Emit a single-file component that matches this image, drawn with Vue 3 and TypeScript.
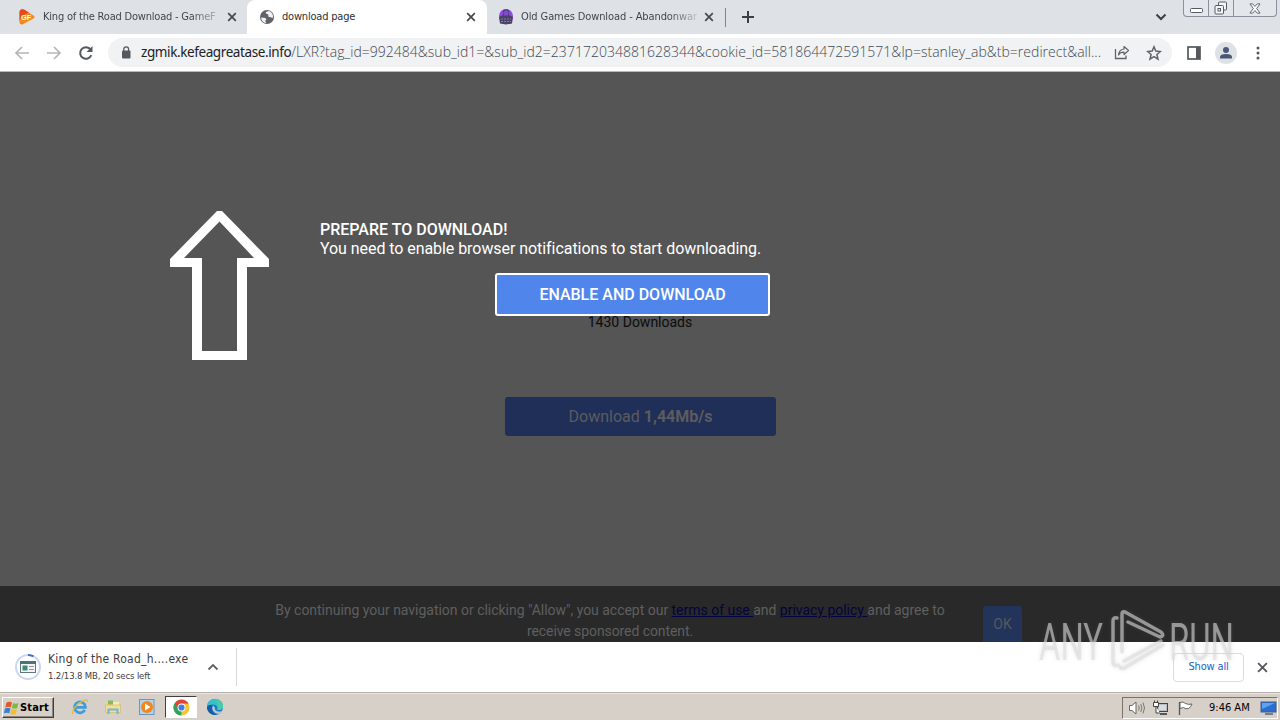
<script setup lang="ts">
const host = 'zgmik.kefeagreatase.info'
const path = '/LXR?tag_id=992484&sub_id1=&sub_id2=237172034881628344&cookie_id=581864472591571&lp=stanley_ab&tb=redirect&all...'
</script>

<template>
  <div class="screen">
    <header class="tabs">
      <div class="tab first">
        <svg class="fav" width="18" height="18" viewBox="0 0 18 18">
          <path d="M3 1.500Q1.500 2 1.500 4V14q0 3 3 2.500L15.500 10.500q2-1.500 0-3L6 1.500Q4.500 1 3 1.500z" fill="#f28a1c" />
          <path d="M3 1.500Q1.500 2 1.500 4V13Q3 7 11 4.500L6 1.500Q4.500 1 3 1.500z" fill="#e8481c" />
          <text x="3" y="12" font-size="7.500" font-weight="700" fill="#fff" font-family="Liberation Sans, sans-serif">GF</text>
        </svg>
        <span class="title t1">King of the Road Download - GameF</span>
        <svg class="close" width="10" height="10" viewBox="0 0 10 10"><path d="M1.200 1.200l7.600 7.600M8.800 1.200L1.200 8.800" /></svg>
      </div>
      <div class="tab active">
        <svg class="fav" width="16" height="16" viewBox="0 0 16 16">
          <circle cx="8" cy="8" r="7" fill="#5f6368" />
          <path d="M2.200 8.500c2 .3 4.600 0 5 1.500.3 1.200-.9 1-.8 2.200.1 1 .9 1.300.7 1.900-2.800-.3-5-2.800-4.900-5.600zM7 3l3-.9c2.200.7 3.800 2.700 4 5l-.3 2c-1.200.2-1.500-1-2.700-1-1.300 0-2.200-.6-1.700-1.800.3-.9-.3-1-1.100-1.200C7 4.900 6.500 3.800 7 3z" fill="#f1f2f3" />
        </svg>
        <span class="title t2">download page</span>
        <svg class="close" width="10" height="10" viewBox="0 0 10 10"><path d="M1.200 1.200l7.600 7.600M8.800 1.200L1.200 8.800" /></svg>
      </div>
      <div class="tab third">
        <svg class="fav" width="16" height="18" viewBox="0 0 16 18">
          <circle cx="8" cy="8" r="7" fill="#9747e8" />
          <path d="M5.500 8V4q0-2 2.500-2t2.500 2v4" fill="none" stroke="#4b3d80" stroke-width="1.300" />
          <path d="M8 2v7M5 5h6" stroke="#6a58a8" />
          <path d="M1 9l3-1.500h8L15 9l-1 6.500-6 1-6-1z" fill="#4a4068" />
          <path d="M3 11h10M3 13.500h10" stroke="#8579a5" stroke-dasharray="2 1" />
        </svg>
        <span class="title t3">Old Games Download - Abandonwar</span>
        <svg class="close" width="10" height="10" viewBox="0 0 10 10"><path d="M1.200 1.200l7.600 7.600M8.800 1.200L1.200 8.800" /></svg>
      </div>
      <i class="divider"></i>
      <svg class="plus" width="14" height="14" viewBox="0 0 14 14"><path d="M7 1v12M1 7h12" stroke="#3c4043" stroke-width="2" /></svg>
      <svg class="chev" width="12" height="8" viewBox="0 0 12 8"><path d="M1.500 1.500L6 6l4.500-4.500" fill="none" stroke="#3c4043" stroke-width="2" /></svg>
      <div class="winctl">
        <span><svg width="13" height="6" viewBox="0 0 13 6"><rect x=".5" y=".5" width="12" height="4" rx="1" fill="#fff" stroke="#555a66" /></svg></span>
        <span><svg width="14" height="14" viewBox="0 0 14 14"><g fill="#f4f5f7" stroke="#555a66"><rect x="4.500" y="1" width="8" height="8" rx="1" /><rect x="1" y="4.500" width="8.500" height="8.500" rx="1" /><rect x="4" y="7.500" width="2.500" height="2.500" /></g></svg></span>
        <span class="wide"><svg width="12" height="11" viewBox="0 0 13 12"><path d="M1 1h3l2.500 2.700L9 1h3L8.300 6 12 11H9L6.500 8.300 4 11H1l3.700-5z" fill="#fff" stroke="#555a66" /></svg></span>
      </div>
    </header>

    <div class="toolbar">
      <svg class="nav" width="16" height="14" viewBox="0 0 16 14"><path d="M15 7H2M8 1L2 7l6 6" fill="none" stroke="#b4b6b9" stroke-width="1.700" /></svg>
      <svg class="nav" width="16" height="14" viewBox="0 0 16 14"><path d="M1 7h13M8 1l6 6-6 6" fill="none" stroke="#b4b6b9" stroke-width="1.700" /></svg>
      <svg class="reload" width="16" height="16" viewBox="0 0 16 16"><path d="M13.300 10.200A5.800 5.800 0 1 1 12.200 4" fill="none" stroke="#55595e" stroke-width="2" /><path d="M14.500 1v6h-6z" fill="#55595e" /></svg>
      <div class="omni">
        <svg class="lock" width="10" height="13" viewBox="0 0 10 13"><rect x="1" y="4.500" width="8.500" height="8" rx="1" fill="#55595e" /><path d="M2.800 5V3.300a2.400 2.400 0 0 1 4.800 0V5" fill="none" stroke="#55595e" stroke-width="1.300" /></svg>
        <div class="url"><span class="host">{{ host }}</span><span class="path">{{ path }}</span></div>
        <svg class="share" width="16" height="15" viewBox="0 0 16 15"><path d="M1.500 4v9.500h10.500v-3" fill="none" stroke="#5f6368" stroke-width="1.300" /><path d="M10 1.500l4.500 4-4.500 4V7.200C7.500 7.200 5.500 8 4.500 10c.2-3 2-5.600 5.500-6z" fill="none" stroke="#5f6368" stroke-width="1.200" stroke-linejoin="round" /></svg>
        <svg class="star" width="16" height="16" viewBox="0 0 16 16"><path d="M8 1.800l1.800 4.300 4.600.4-3.500 3 1.100 4.600L8 11.700l-4 2.400 1.100-4.600-3.500-3 4.600-.4z" fill="none" stroke="#5f6368" stroke-width="1.500" /></svg>
      </div>
      <svg class="panel" width="14" height="14" viewBox="0 0 14 14"><rect x="1" y="1" width="12" height="12" fill="none" stroke="#55595e" stroke-width="1.700" /><path d="M9 1h4v12H9z" fill="#55595e" /></svg>
      <svg class="avatar" width="22" height="22" viewBox="0 0 22 22"><circle cx="11" cy="11" r="11" fill="#dee1e6" /><circle cx="11" cy="8" r="3" fill="#4a5873" /><path d="M5 16.500v-1.500q0-3 6-3t6 3v1.500z" fill="#4a5873" /></svg>
      <svg class="dots" width="4" height="14" viewBox="0 0 4 14"><g fill="#55595e"><circle cx="2" cy="2" r="1.500" /><circle cx="2" cy="7" r="1.500" /><circle cx="2" cy="12" r="1.500" /></g></svg>
    </div>

    <main class="page">
      <div class="prompt">
        <svg class="arrow" width="99" height="149" viewBox="0 0 99 149"><path fill="#fff" fill-rule="evenodd" d="M47 0h5L99 48v8H77v93H22V56H0V48zM49.500 10.500L14 47h18v93h35V47h17z" /></svg>
        <div class="msg">
          <div class="head">PREPARE TO DOWNLOAD!</div>
          <div class="need">You need to enable browser notifications to start downloading.</div>
          <button class="enable">ENABLE AND DOWNLOAD</button>
        </div>
      </div>
      <div class="count">1430 Downloads</div>
      <div class="dl">Download&nbsp;<b>1,44Mb/s</b></div>
      <footer class="consent">
        <div class="ctext">
          <div class="l1">By continuing your navigation or clicking "Allow", you accept our <u>terms of use </u>and <u>privacy policy </u>and agree to</div>
          <div class="l2">receive sponsored content.</div>
        </div>
        <div class="ok">OK</div>
      </footer>
    </main>

    <section class="shelf">
      <svg class="file" width="28" height="28" viewBox="0 0 28 28">
        <circle cx="14" cy="14" r="12" fill="none" stroke="#c9d7f3" stroke-width="2" />
        <path d="M14 2a12 12 0 0 1 5.500 1.400" fill="none" stroke="#3f6fc4" stroke-width="2.200" />
        <rect x="6.500" y="8.500" width="15" height="11" fill="#f2f5f4" stroke="#5f7780" />
        <path d="M6 8h16v3H6z" fill="#50707c" />
        <path d="M8.500 12.500h5v5h-5z" fill="#3f8a78" />
        <path d="M15 13.500h5M15 16.500h5" stroke="#8a989c" />
      </svg>
      <div class="names"><div class="fname">King of the Road_h....exe</div><div class="prog">1.2/13.8 MB, 20 secs left</div></div>
      <svg class="caret" width="12" height="8" viewBox="0 0 12 8"><path d="M1.500 6.500L6 2l4.500 4.500" fill="none" stroke="#5f6368" stroke-width="1.800" /></svg>
      <i class="sep"></i>
      <div class="showall">Show all</div>
      <svg class="sx" width="11" height="11" viewBox="0 0 10 10"><path d="M1 1l8 8M9 1L1 9" stroke="#55595e" stroke-width="1.700" /></svg>
    </section>

    <footer class="taskbar">
      <div class="start">
        <svg width="17" height="16" viewBox="0 0 17 16">
          <path d="M3.500 2.500q3-1.500 5.500 0L7.800 7.500q-2.500-1.300-5.500 0z" fill="#e2582b" />
          <path d="M10 3q2.500 1.300 5.500 0L14.300 8q-3 1.200-5.500 0z" fill="#7fb843" />
          <path d="M2 8.500q3-1.300 5.500 0L6.300 13.300q-2.500-1.300-5.500 0z" fill="#3f80cc" />
          <path d="M8.500 9q2.500 1.200 5.500 0l-1.200 5q-3 1.200-5.500 0z" fill="#f3bf2c" />
        </svg>
        <span>Start</span>
      </div>
      <svg class="ie" width="18" height="18" viewBox="0 0 18 18">
        <path d="M13.800 12A5.500 5.500 0 1 1 14.500 9.300H4.500" fill="none" stroke="#3b9ddd" stroke-width="2.700" />
        <path d="M2 16C0 13 6 5 13 2.300q4-1.500 3.300 1.500" fill="none" stroke="#e8b93a" stroke-width="1.300" />
      </svg>
      <svg class="folder" width="18" height="18" viewBox="0 0 18 18">
        <path d="M2 3h5l1 1.500h7V14H2z" fill="#ecd680" />
        <path d="M4 2.500h5v4H4z" fill="#83b96b" /><path d="M9 4h6v4H9z" fill="#f7ecb2" />
        <path d="M1.500 7h15v7.500h-15z" fill="#f3df93" stroke="#d1b65c" stroke-width=".6" />
        <path d="M4.500 16v-4.500h9V16" fill="none" stroke="#72b8dd" stroke-width="2.200" />
      </svg>
      <svg class="wmp" width="18" height="18" viewBox="0 0 18 18">
        <rect x="1.500" y="1.500" width="14.500" height="15" fill="#b5d3ec" stroke="#6796c0" />
        <circle cx="9" cy="9" r="6" fill="#f0861d" /><path d="M7 5.500v7L12.500 9z" fill="#fff" />
      </svg>
      <div class="pressed">
        <svg width="17" height="17" viewBox="0 0 16 16">
          <path d="M8 8L1.500 4.250A7.500 7.500 0 0 1 14.500 4.250z" fill="#e04434" />
          <path d="M8 8L14.500 4.250A7.500 7.500 0 0 1 8 15.500z" fill="#f9c22f" />
          <path d="M8 8V15.500A7.500 7.500 0 0 1 1.500 4.250z" fill="#35a353" />
          <path d="M8 4.200h6.400l.3.500-3.300 5z" fill="#f9c22f" /><path d="M8 4h6.300a7 7 0 0 0-.6-1z" fill="#e04434" />
          <path d="M4.800 9.800L1.500 4.250 8 4.200z" fill="#e04434" /><path d="M1.500 4.250L5 9.800 8 12 6.500 15.300A7.500 7.500 0 0 1 1.500 4.250z" fill="#35a353" />
          <circle cx="8" cy="8" r="3.700" fill="#fff" /><circle cx="8" cy="8" r="2.900" fill="#3f7de8" />
        </svg>
      </div>
      <svg class="edge" width="18" height="18" viewBox="0 0 18 18">
        <circle cx="9" cy="9" r="8" fill="#1a79c9" />
        <path d="M1 8.500A8 8 0 0 1 17 9c0 3-4 3.600-6 2.500 1.500-2-.5-5-4-5-3 0-5.300 1-6 2z" fill="#35c1c9" />
        <path d="M9 1a8 8 0 0 1 8 8c0 3-4 3.600-6 2.500 2-2.500 0-8-2-10.500z" fill="#51cf9a" opacity=".7" />
        <path d="M7 7.500c-2 3 .5 8 5.500 8.500q2.500-1 3.500-3c-3 1.300-8 .5-7-3.200z" fill="#d6d0c8" opacity=".9" />
        <path d="M6.500 7.500C4.500 11 7 16 11 16.700A8 8 0 0 1 1 9c1.500-2 4-2.300 5.500-1.500z" fill="#145ca8" />
      </svg>
      <div class="tray">
        <svg class="vol" width="18" height="16" viewBox="0 0 18 16"><path d="M1.500 5.500H4L8 2v12L4 10.500H1.500z" fill="#fff" stroke="#666" /><path d="M10.500 5.500q1.500 2.500 0 5M12.700 4q2.500 4 0 8M15 2.500q3 5.500 0 11" fill="none" stroke="#777" /></svg>
        <svg class="net" width="18" height="16" viewBox="0 0 18 16"><rect x="5.500" y="3.500" width="10" height="8" fill="#b9bcc0" stroke="#444" /><path d="M7 5h7v5H7z" fill="#d9dcdf" /><path d="M8 14h7" stroke="#555" stroke-width="2" /><path d="M1.500 2.500h5v4h-5zM2.500.5v2M5.500.5v2M4 6.500V13h4" fill="#fff" stroke="#444" /></svg>
        <svg class="flag" width="18" height="16" viewBox="0 0 18 16"><path d="M3.500 15V2" stroke="#555" stroke-width="1.300" /><path d="M4 2.500q3-1.500 5.500 1 3 1.500 6.500.5-1 3-3.500 4.500-3 1-5-1L4 8.500z" fill="#fff" stroke="#666" /></svg>
        <span class="time">9:46 AM</span>
        <svg class="desk" width="17" height="14" viewBox="0 0 17 14"><rect x="1" y="1" width="15" height="10" fill="#2a6fd0" stroke="#3c5c94" /><path d="M2 2h13L2 8z" fill="#5da2ee" /><path d="M5 13h8" stroke="#56606e" stroke-width="1.500" /></svg>
      </div>
    </footer>

    <svg class="mark" width="210" height="76" viewBox="1030 604 210 76">
      <g opacity=".6">
        <g fill="#dcdcdc" font-family="Roboto, sans-serif" font-size="52" font-weight="400">
          <text x="1039" y="660" textLength="64" lengthAdjust="spacingAndGlyphs">ANY</text>
          <text x="1169" y="660" textLength="65" lengthAdjust="spacingAndGlyphs">RUN</text>
        </g>
        <g fill="none" stroke="#dcdcdc" stroke-width="3.500" stroke-linecap="round" stroke-linejoin="round">
          <path d="M1117 618q-4-1-4 3v41q0 5 5 3" />
          <path d="M1122 652V614q0-3 3-2L1161 632q4 4-1 5L1128 622" />
          <path d="M1161 641L1124 661M1163 645L1126 667q-4 3-6 0" />
        </g>
      </g>
    </svg>
  </div>
</template>

<style>
body { margin: 0; }
</style>

<style scoped>
* { box-sizing: border-box; }
svg { display: block; flex: none; }
.screen { position: relative; width: 1280px; height: 720px; overflow: hidden; display: flex; flex-direction: column; background: #fff; font-family: "DejaVu Sans Condensed", "DejaVu Sans", sans-serif; font-size: 11px; color: #3c4043; }
.tabs { height: 34px; background: #dee1e6; display: flex; align-items: center; flex: none; }
.tab { height: 34px; display: flex; align-items: center; flex: none; }
.first { width: 247px; padding-left: 18px; border-bottom-right-radius: 8px; }
.active { width: 240px; padding-left: 12px; background: #fff; border-radius: 8px 8px 0 0; color: #2c2f33; }
.third { width: 238px; padding-left: 11px; }
.title { white-space: nowrap; width: 181px; padding-left: 7px; line-height: 16px; }
.first .title { width: 191px; }
.active .title { width: 191px; }
.third .title { width: 190px; }
.t1 { letter-spacing: -0.2px; color: transparent; background: linear-gradient(90deg, #3c4043 155px, #b9bcc1 182px); background-clip: text; }
.t2 { letter-spacing: -0.2px; }
.t3 { letter-spacing: -0.1px; color: transparent; background: linear-gradient(90deg, #3c4043 155px, #c4c7cb 184px); background-clip: text; }
.close { fill: none; stroke: #45494d; stroke-width: 1.7; }
.divider { width: 1px; height: 19px; background: #80858b; }
.plus { margin-left: 15px; }
.chev { margin-left: 400px; }
.winctl { align-self: flex-start; margin-left: 16px; height: 17px; display: flex; border: 1px solid #8b909b; border-top: 0; border-radius: 0 0 4px 4px; background: #e3e6eb; }
.winctl span { width: 25px; display: flex; align-items: center; justify-content: center; border-right: 1px solid #8b909b; }
.winctl span:first-child { padding-top: 5px; }
.winctl .wide { width: 42px; border: 0; }
.toolbar { height: 38px; flex: none; display: flex; align-items: center; padding-left: 14px; border-bottom: 1px solid #b5b7ba; }
.nav { margin-right: 16px; }
.omni { width: 1064px; height: 29px; margin-left: 14px; border-radius: 15px; background: #f0f2f4; display: flex; align-items: center; padding-left: 13px; }
.url { width: 973px; padding-left: 10px; white-space: nowrap; line-height: 24px; color: #202124; }
.host { font-family: "Noto Sans", sans-serif; font-size: 13.5px; letter-spacing: -0.4px; }
.path { font-family: "Open Sans", sans-serif; font-size: 14px; font-weight: 300; letter-spacing: 0.02px; color: #45494e; }
.share { margin-left: 10px; }
.star { margin-left: 16px; }
.panel { margin-left: 15px; }
.avatar { margin-left: 14px; }
.dots { margin-left: 19px; }
.page { height: 570px; flex: none; background: #555; font-family: Roboto, sans-serif; font-size: 16px; display: flex; flex-direction: column; align-items: center; }
.prompt { align-self: stretch; height: 244px; flex: none; padding: 139px 0 0 170px; display: flex; align-items: flex-start; color: #fff; }
.msg { width: 450px; margin: 9px 0 0 51px; line-height: 19px; white-space: nowrap; display: flex; flex-direction: column; }
.head { font-weight: 500; }
.need { letter-spacing: -0.06px; }
.enable { align-self: flex-end; width: 275px; height: 43px; margin-top: 15px; padding: 0; border: 2px solid #fff; border-radius: 3px; background: #5086ec; color: #fff; font: 500 16px Roboto, sans-serif; }
.count { font-size: 14px; line-height: 12px; color: #0c0c0c; }
.dl { width: 271px; height: 39px; margin: 69px 0 150px 1px; flex: none; border-radius: 3px; background: #1f2f57; color: #5c5c5e; display: flex; align-items: center; justify-content: center; }
.dl b { font-weight: 700; }
.consent { align-self: stretch; height: 56px; flex: none; overflow: hidden; background: #292929; color: #5f5f5f; font-size: 14px; line-height: 21px; display: flex; }
.ctext { width: 700px; margin-left: 260px; padding-top: 14px; text-align: center; white-space: nowrap; letter-spacing: -0.02px; }
.l2 { letter-spacing: -0.08px; }
u { color: #04043c; }
.ok { width: 39px; height: 36px; margin: 20px 0 0 23px; border-radius: 3px 3px 0 0; background: #22345a; color: #55585f; line-height: 36px; text-align: center; }
.shelf { height: 51px; flex: none; background: #fff; border-bottom: 1px solid #b5b1aa; display: flex; align-items: center; padding-left: 14px; }
.names { width: 152px; margin: -1px 0 0 6px; white-space: nowrap; }
.fname { font-size: 12px; line-height: 18px; letter-spacing: 0.24px; }
.prog { font-size: 9.5px; line-height: 15px; letter-spacing: -0.15px; }
.caret { margin-left: 7px; }
.sep { width: 1px; height: 38px; margin-left: 17px; background: #d5d7da; }
.showall { width: 71px; height: 29px; margin-left: 936px; border: 1px solid #dadce0; border-radius: 4px; text-align: center; line-height: 26px; letter-spacing: -0.15px; color: #1a62c6; }
.sx { margin-left: 13px; }
.taskbar { height: 27px; flex: none; background: #d6d0c8; border-top: 1px solid #e9e5df; display: flex; align-items: center; padding-left: 2px; }
.start { width: 52px; height: 21px; margin-top: 1px; display: flex; align-items: center; border: 1px solid; border-color: #fff #404040 #404040 #fff; box-shadow: inset -1px -1px #8b877f; color: #000; font-weight: 700; letter-spacing: 0.16px; }
.ie { margin-left: 17px; }
.folder { margin-left: 15px; }
.wmp { margin-left: 16px; }
.pressed { width: 32px; height: 22px; margin-left: 9px; background: #fff; border: 1px solid; border-color: #404040 #fff #fff #404040; display: flex; align-items: center; justify-content: center; }
.edge { margin-left: 9px; }
.tray { width: 156px; height: 22px; margin: 1px 0 0 898px; border: 1px solid; border-color: #77736c #fff #fff #77736c; display: flex; align-items: center; padding-left: 5px; color: #000; }
.net { margin-left: 6px; }
.flag { margin-left: 6px; }
.time { width: 43px; margin-left: 15px; white-space: nowrap; }
.desk { margin-left: 8px; }
.mark { position: absolute; left: 1030px; top: 604px; filter: drop-shadow(0 0 2px rgba(120, 120, 120, 0.3)); }
</style>
